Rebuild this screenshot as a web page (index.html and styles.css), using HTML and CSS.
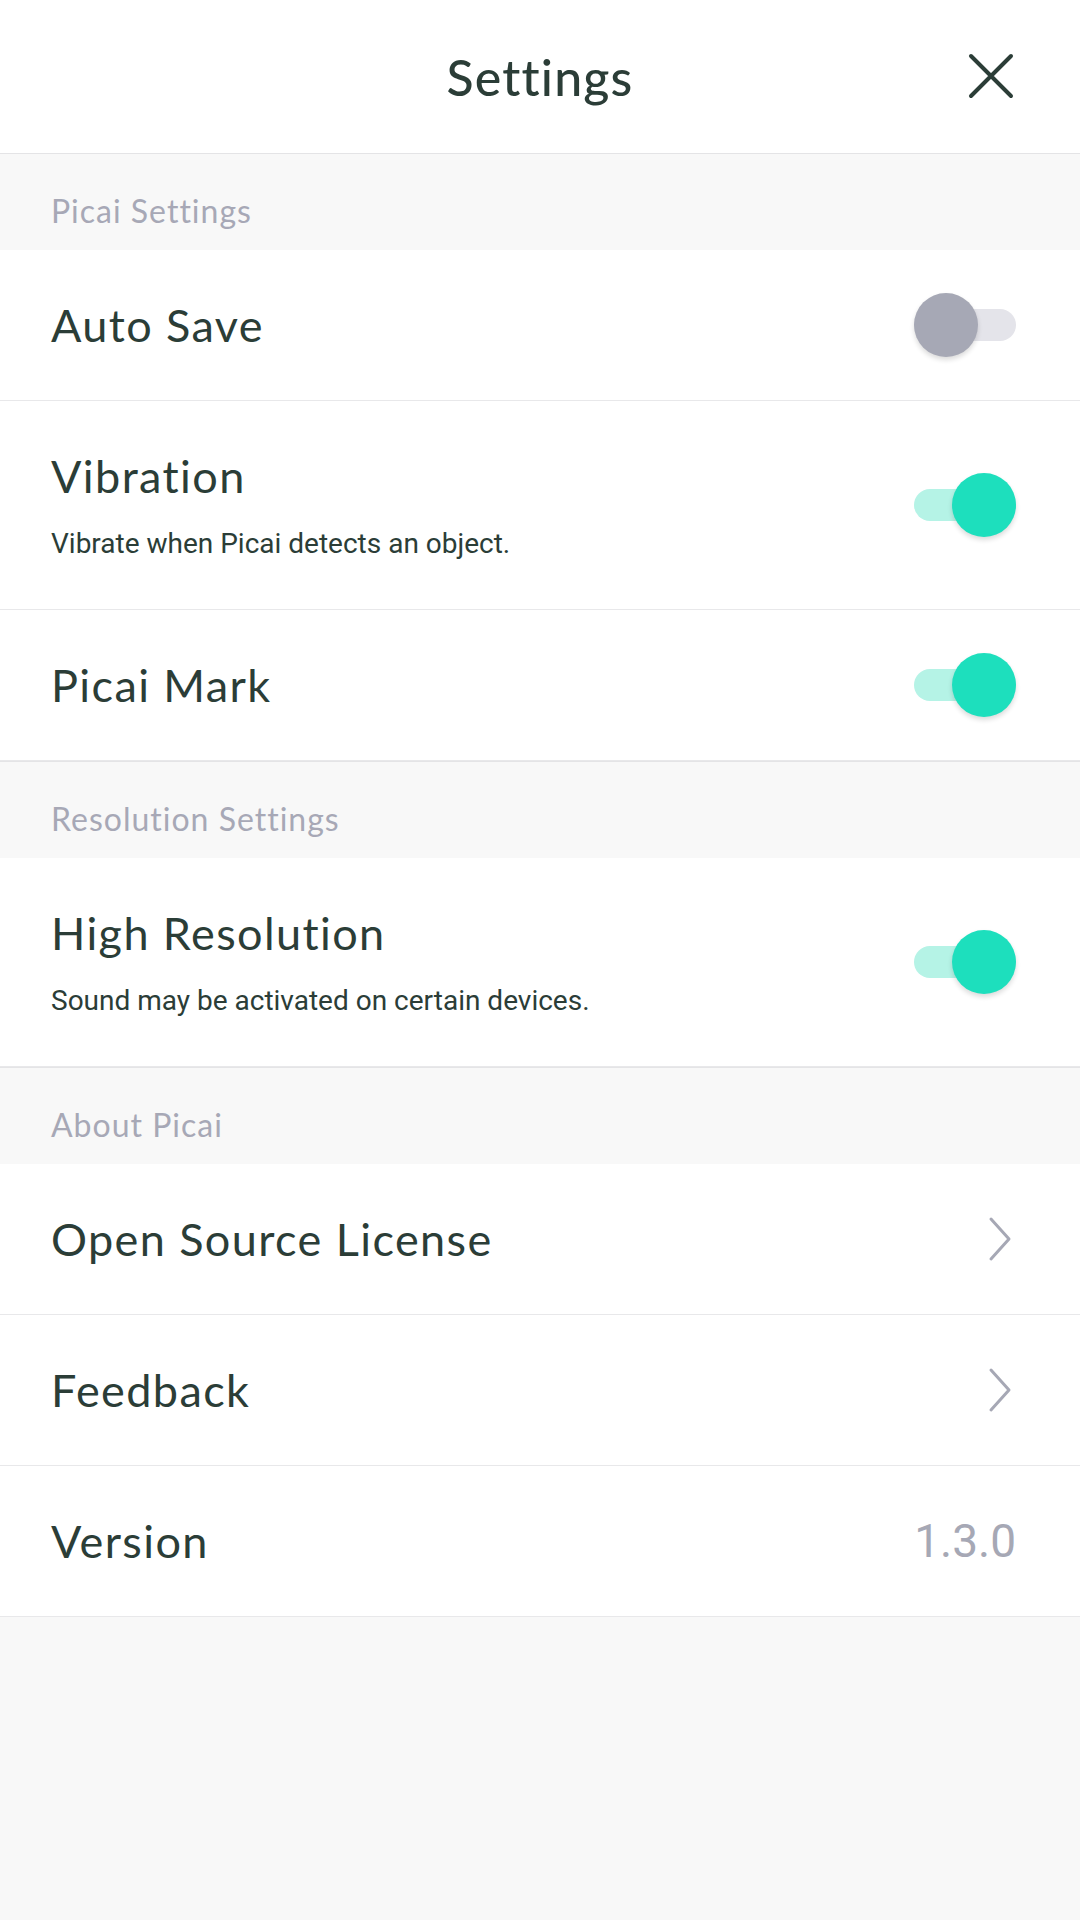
FILE: index.html
```html
<!DOCTYPE html>
<html lang="en">
<head>
<meta charset="utf-8">
<title>Settings</title>
<link rel="stylesheet" href="styles.css">
</head>
<body>
<div class="screen">
  <header class="topbar">
    <h1 class="title">Settings</h1>
    <button class="close" aria-label="Close">
      <svg width="46" height="46" viewBox="0 0 46 46"><path d="M3 3 L43 43 M43 3 L3 43" stroke="#2b3d37" stroke-width="4" stroke-linecap="round" fill="none"/></svg>
    </button>
  </header>

  <div class="section">Picai Settings</div>
  <div class="row">
    <div class="texts"><div class="label">Auto Save</div></div>
    <div class="toggle off"><span class="track"></span><span class="knob"></span></div>
  </div>
  <div class="row tall">
    <div class="texts">
      <div class="label">Vibration</div>
      <div class="sub">Vibrate when Picai detects an object.</div>
    </div>
    <div class="toggle on"><span class="track"></span><span class="knob"></span></div>
  </div>
  <div class="row">
    <div class="texts"><div class="label">Picai Mark</div></div>
    <div class="toggle on"><span class="track"></span><span class="knob"></span></div>
  </div>

  <div class="section">Resolution Settings</div>
  <div class="row tall">
    <div class="texts">
      <div class="label">High Resolution</div>
      <div class="sub">Sound may be activated on certain devices.</div>
    </div>
    <div class="toggle on"><span class="track"></span><span class="knob"></span></div>
  </div>

  <div class="section">About Picai</div>
  <div class="row">
    <div class="texts"><div class="label">Open Source License</div></div>
    <svg class="chev" width="24" height="46" viewBox="0 0 24 46"><path d="M3 3 L21 23 L3 43" stroke="#a6a8b5" stroke-width="3" stroke-linecap="round" stroke-linejoin="round" fill="none"/></svg>
  </div>
  <div class="row">
    <div class="texts"><div class="label">Feedback</div></div>
    <svg class="chev" width="24" height="46" viewBox="0 0 24 46"><path d="M3 3 L21 23 L3 43" stroke="#a6a8b5" stroke-width="3" stroke-linecap="round" stroke-linejoin="round" fill="none"/></svg>
  </div>
  <div class="row">
    <div class="texts"><div class="label">Version</div></div>
    <div class="version">1.3.0</div>
  </div>
</div>
</body>
</html>
```

FILE: styles.css
```css
* { box-sizing: border-box; }
html, body { margin: 0; padding: 0; }
body {
  width: 1080px;
  min-height: 1920px;
  background: #f8f8f8;
  font-family: Lato, "Noto Sans", sans-serif;
  color: #2b3d37;
}
.screen { display: flex; flex-direction: column; }

.topbar {
  height: 154px;
  background: #ffffff;
  border-bottom: 1px solid #e4e4e6;
  display: flex;
  align-items: center;
  justify-content: center;
  position: relative;
}
.title {
  margin: 0;
  font-size: 50px;
  font-weight: 500;
  color: #2b3d37;
  letter-spacing: 1.2px;
}
.close {
  position: absolute;
  right: 66px;
  top: 53px;
  width: 46px;
  height: 46px;
  padding: 0;
  border: 0;
  background: transparent;
  display: flex;
}

.section {
  height: 97px;
  border-top: 1px solid #e4e4e6;
  background: #f8f8f8;
  padding: 16px 0 0 51px;
  display: flex;
  align-items: center;
  font-size: 32px;
  letter-spacing: 1px;
  color: #a7a8b6;
}
.topbar + .section { border-top: 0; height: 96px; }

.row {
  min-height: 151px;
  background: #ffffff;
  border-bottom: 1px solid #e8e8ea;
  display: flex;
  align-items: center;
  justify-content: space-between;
  padding: 0 64px 0 51px;
}
.row.tall { min-height: 209px; }
.texts { display: flex; flex-direction: column; }
.label {
  font-size: 45px;
  line-height: 52px;
  letter-spacing: 1.4px;
  color: #2b3d37;
}
.sub {
  margin-top: 26px;
  font-family: Roboto, "Noto Sans", sans-serif;
  font-size: 28px;
  line-height: 32px;
  color: #2b3d37;
}

.toggle {
  position: relative;
  width: 102px;
  height: 64px;
  flex: none;
}
.track {
  position: absolute;
  left: 0;
  top: 16px;
  width: 102px;
  height: 32px;
  border-radius: 16px;
}
.knob {
  position: absolute;
  top: 0;
  width: 64px;
  height: 64px;
  border-radius: 50%;
  box-shadow: 0 3px 5px rgba(0, 0, 0, 0.14);
}
.toggle.off .track { background: #e4e4ea; }
.toggle.off .knob { left: 0; background: #a6a8b5; }
.toggle.on .track { background: #b5f3e6; }
.toggle.on .knob { right: 0; background: #1ddfbd; }

.chev { flex: none; margin-right: 4px; }
.version {
  font-family: Roboto, "Noto Sans", sans-serif;
  font-size: 46px;
  color: #a6a8b5;
}
```
